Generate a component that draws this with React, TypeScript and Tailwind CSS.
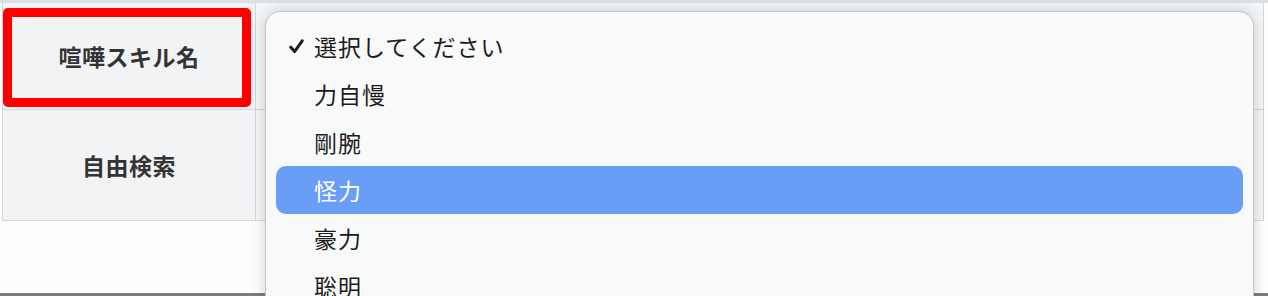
import React from "react";

const font = { fontFamily: '"Noto Sans CJK JP", "Noto Sans", sans-serif' };

const items = ["選択してください", "力自慢", "剛腕", "怪力", "豪力", "聡明"];

export default function App() {
  return (
    <div className="relative w-[1268px] h-[296px] overflow-hidden bg-[#fdfdfd] flex flex-col" style={font}>
      <div className="h-[3px] bg-[#dcdfe6] shrink-0" />
      <div className="ml-[2px] mr-[4px] grid grid-cols-[253px_1fr] grid-rows-[107px_110px] border-l border-b border-r border-[#d3d5da] shrink-0">
        <div className="relative flex items-center justify-center bg-[#f2f3f5] border-r border-b border-[#d3d5da] text-[23px] font-bold text-[#333]">
          <span className="tracking-[0.5px]">喧嘩スキル名</span>
          <div className="absolute left-[0px] top-[5px] w-[248px] h-[99px] border-[9px] border-[#ff0000] rounded-[5px]" />
        </div>
        <div className="bg-[#f4f5f6] border-b border-[#d3d5da]" />
        <div className="flex items-center justify-center bg-[#f2f3f5] border-r border-[#d3d5da] text-[23px] font-bold text-[#333]">
          <span className="tracking-[0.5px]">自由検索</span>
        </div>
        <div className="bg-[#f4f5f6]" />
      </div>
      <div className="flex-1" />
      <div className="h-[3px] bg-[#7d7d7d] shrink-0" />

      <div className="absolute left-[265px] top-[11px] w-[989px] h-[300px] bg-[#f8f9f9] rounded-[15px] border border-[#c4c4c4] shadow-[0_0_14px_rgba(0,0,0,0.18)] px-[10px] pt-[10px]">
        <div className="flex flex-col">
          {items.map((t, i) => {
            const active = t === "怪力";
            return (
              <div
                key={t}
                className={
                  active
                    ? "h-[48px] shrink-0 flex items-center rounded-[10px] bg-[#699ef6] text-white"
                    : "h-[48px] shrink-0 flex items-center rounded-[10px] text-[#1c1c1c]"
                }
              >
                <span className="w-[38px] flex justify-end pr-[10px]">
                  {i === 0 ? (
                    <svg width="15" height="15" viewBox="0 0 15 15">
                      <path d="M1.8 8.2 L5.6 12.6 L13.2 1.8" fill="none" stroke="#1c1c1c" strokeWidth="3" strokeLinecap="round" strokeLinejoin="round" />
                    </svg>
                  ) : null}
                </span>
                <span className="text-[23px] tracking-[1px] leading-none">{t}</span>
              </div>
            );
          })}
        </div>
      </div>
    </div>
  );
}
